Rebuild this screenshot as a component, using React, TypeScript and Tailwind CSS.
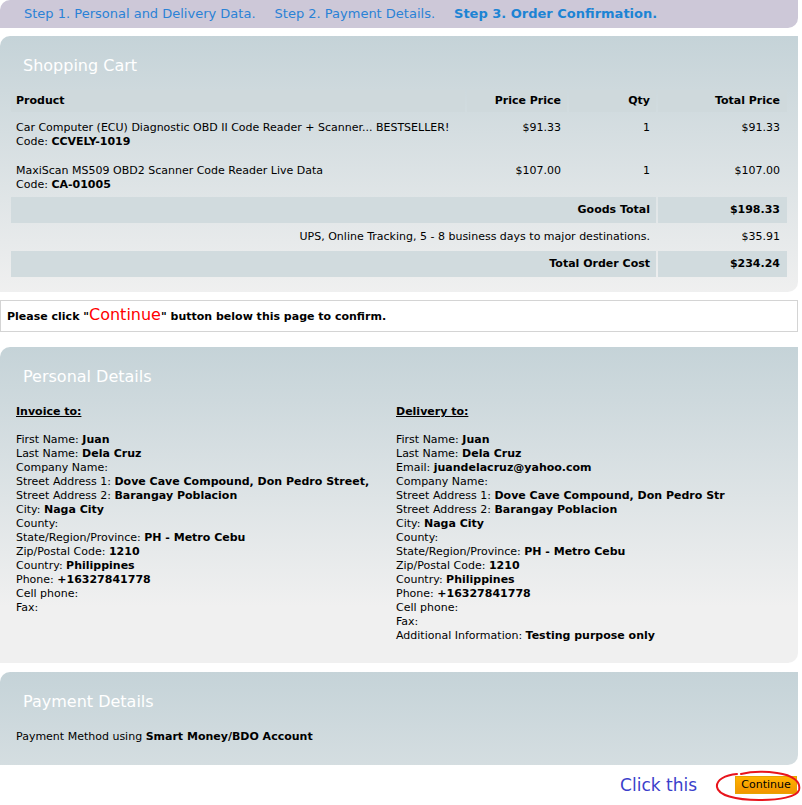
import React from "react";

type Line = { label: string; value?: string };

const invoice: Line[] = [
  { label: "First Name:", value: "Juan" },
  { label: "Last Name:", value: "Dela Cruz" },
  { label: "Company Name:" },
  { label: "Street Address 1:", value: "Dove Cave Compound, Don Pedro Street," },
  { label: "Street Address 2:", value: "Barangay Poblacion" },
  { label: "City:", value: "Naga City" },
  { label: "County:" },
  { label: "State/Region/Province:", value: "PH - Metro Cebu" },
  { label: "Zip/Postal Code:", value: "1210" },
  { label: "Country:", value: "Philippines" },
  { label: "Phone:", value: "+16327841778" },
  { label: "Cell phone:" },
  { label: "Fax:" },
];

const delivery: Line[] = [
  { label: "First Name:", value: "Juan" },
  { label: "Last Name:", value: "Dela Cruz" },
  { label: "Email:", value: "juandelacruz@yahoo.com" },
  { label: "Company Name:" },
  { label: "Street Address 1:", value: "Dove Cave Compound, Don Pedro Str" },
  { label: "Street Address 2:", value: "Barangay Poblacion" },
  { label: "City:", value: "Naga City" },
  { label: "County:" },
  { label: "State/Region/Province:", value: "PH - Metro Cebu" },
  { label: "Zip/Postal Code:", value: "1210" },
  { label: "Country:", value: "Philippines" },
  { label: "Phone:", value: "+16327841778" },
  { label: "Cell phone:" },
  { label: "Fax:" },
  { label: "Additional Information:", value: "Testing purpose only" },
];

const items = [
  {
    name: "Car Computer (ECU) Diagnostic OBD II Code Reader + Scanner... BESTSELLER!",
    code: "CCVELY-1019",
    price: "$91.33",
    qty: 1,
    total: "$91.33",
    pad: "pt-[7px] pb-[6px]",
  },
  {
    name: "MaxiScan MS509 OBD2 Scanner Code Reader Live Data",
    code: "CA-01005",
    price: "$107.00",
    qty: 1,
    total: "$107.00",
    pad: "pt-[7px] pb-[3px]",
  },
];

const Panel: React.FC<{ title: string; className?: string; children: React.ReactNode }> = ({
  title,
  className = "",
  children,
}) => (
  <div
    className={`rounded-tl-[10px] rounded-br-[10px] bg-[linear-gradient(#c5d3d8,#f0f0f0_260px)] pt-[20px] ${className}`}
  >
    <h2 className="pl-[23px] text-[16px] leading-[20px] font-normal text-white">{title}</h2>
    {children}
  </div>
);

const AddressBlock: React.FC<{ heading: string; lines: Line[] }> = ({ heading, lines }) => (
  <div className="w-[380px]">
    <div className="font-bold underline">{heading}</div>
    <div className="mt-[14px]">
      {lines.map((l, i) => (
        <div key={i} className="whitespace-nowrap">
          {l.label} {l.value && <b>{l.value}</b>}
        </div>
      ))}
    </div>
  </div>
);

export default function App() {
  return (
    <div className="min-h-[805px] w-[802px] bg-white font-['DejaVu_Sans',sans-serif] text-[11px] leading-[14px] text-black">
      <div className="w-[798px]">
        {/* steps */}
        <div className="flex h-[28px] items-center gap-[19px] rounded-tl-[10px] rounded-br-[10px] bg-[#cdc8d8] pl-[24px] text-[13px] text-[#2a82d6]">
          <span>Step 1. Personal and Delivery Data.</span>
          <span>Step 2. Payment Details.</span>
          <span className="font-bold text-[#1c84d4]">Step 3. Order Confirmation.</span>
        </div>

        {/* cart */}
        <Panel title="Shopping Cart" className="mt-[8px] pb-[13px] pl-[9px] [&>h2]:pl-[14px]">
          <table className="mt-[12px] w-[780px] border-separate border-spacing-[2px]">
            <thead>
              <tr className="bg-[#cfd9dc] font-bold">
                <td className="h-[22px] pl-[5px]">Product</td>
                <td className="w-[100px] pr-[6px] text-right">Price Price</td>
                <td className="w-[87px] pr-[6px] text-right">Qty</td>
                <td className="w-[129px] pr-[7px] text-right">Total Price</td>
              </tr>
            </thead>
            <tbody>
              {items.map((it) => (
                <tr key={it.code} className="align-top">
                  <td className={`${it.pad} pl-[5px]`}>
                    <div className="whitespace-nowrap">{it.name}</div>
                    <div>
                      Code: <b>{it.code}</b>
                    </div>
                  </td>
                  <td className="pt-[7px] pr-[6px] text-right">{it.price}</td>
                  <td className="pt-[7px] pr-[6px] text-right">{it.qty}</td>
                  <td className="pt-[7px] pr-[7px] text-right">{it.total}</td>
                </tr>
              ))}
              <tr className="bg-[#d1dbde] font-bold">
                <td colSpan={3} className="h-[26px] pr-[6px] text-right">
                  Goods Total
                </td>
                <td className="pr-[7px] text-right">$198.33</td>
              </tr>
              <tr>
                <td colSpan={3} className="h-[24px] pr-[6px] text-right">
                  UPS, Online Tracking, 5 - 8 business days to major destinations.
                </td>
                <td className="pr-[7px] text-right">$35.91</td>
              </tr>
              <tr className="bg-[#d1dbde] font-bold">
                <td colSpan={3} className="h-[26px] pr-[6px] text-right">
                  Total Order Cost
                </td>
                <td className="pr-[7px] text-right">$234.24</td>
              </tr>
            </tbody>
          </table>
        </Panel>

        {/* notice */}
        <div className="mt-[8px] flex h-[32px] items-center border border-[#d4d4d4] pl-[6px] font-bold">
          <span>
            Please click "<span className="text-[16px] font-normal text-[#ff0000]">Continue</span>" button below
            this page to confirm.
          </span>
        </div>

        {/* personal */}
        <Panel title="Personal Details" className="mt-[15px] pb-[20px]">
          <div className="mt-[18px] flex pl-[16px]">
            <AddressBlock heading="Invoice to:" lines={invoice} />
            <AddressBlock heading="Delivery to:" lines={delivery} />
          </div>
        </Panel>

        {/* payment */}
        <Panel title="Payment Details" className="mt-[9px] pb-[21px]">
          <div className="mt-[18px] pl-[16px]">
            Payment Method using <b>Smart Money/BDO Account</b>
          </div>
        </Panel>

        {/* action */}
        <div className="mt-[8px] mr-[1px] flex items-center justify-end gap-[38px]">
          <span className="text-[17px] leading-[24px] text-[#3b3fcb]">Click this</span>
          <div className="relative">
            <button className="h-[18px] w-[62px] border border-[#e7a400] bg-[linear-gradient(#ffb300,#f29400)] text-[11px] leading-[16px] text-black">
              Continue
            </button>
            <svg
              className="pointer-events-none absolute left-[-20px] top-[-6px]"
              width="86"
              height="34"
              viewBox="0 0 86 34"
              fill="none"
            >
              <path
                d="M22 4 C10 5 1 10 2 17 C3 25 20 30 44 30 C64 30 82 27 84 20 C86 12 78 5 62 3 C48 1 34 2 26 4"
                stroke="#e8141c"
                strokeWidth="2"
                strokeLinecap="round"
              />
            </svg>
          </div>
        </div>
      </div>
    </div>
  );
}
